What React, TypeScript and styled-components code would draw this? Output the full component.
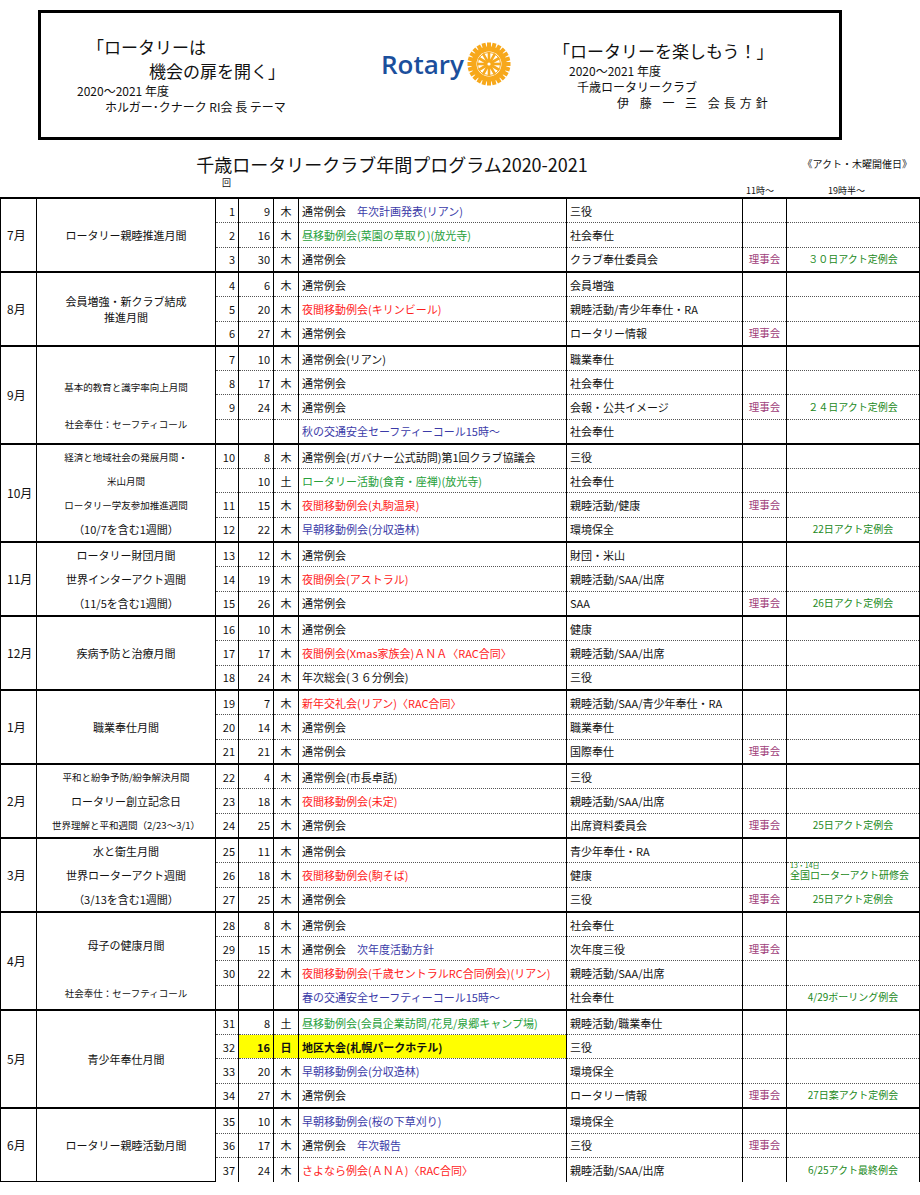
import React from 'react';
import styled, { createGlobalStyle } from 'styled-components';

const Global = createGlobalStyle`
  body { margin: 0; background: #fff; font-family: "Noto Sans CJK JP", "Liberation Sans", sans-serif; color: #111; }
`;

const C = {
  k: '#111',
  b: '#3b3ba8',
  g: '#27a03a',
  r: '#ff1c1c',
  board: '#a0407a',
  act: '#228a22',
};

type Seg = { t: string; c?: string };
type Row = {
  no?: string;
  d?: string;
  w?: string;
  prog: Seg[];
  com: string;
  board?: boolean;
  act?: string;
  actNote?: string;
  hl?: boolean;
};
type Month = { m: string; theme: { t: string; small?: boolean }[]; rows: Row[] };

const P = (t: string, c = C.k): Seg[] => [{ t, c }];

const data: Month[] = [
  {
    m: '7月',
    theme: [{ t: 'ロータリー親睦推進月間' }],
    rows: [
      { no: '1', d: '9', w: '木', prog: [{ t: '通常例会　' }, { t: '年次計画発表(リアン)', c: C.b }], com: '三役' },
      { no: '2', d: '16', w: '木', prog: P('昼移動例会(菜園の草取り)(放光寺)', C.g), com: '社会奉仕' },
      { no: '3', d: '30', w: '木', prog: P('通常例会'), com: 'クラブ奉仕委員会', board: true, act: '３０日アクト定例会' },
    ],
  },
  {
    m: '8月',
    theme: [{ t: '会員増強・新クラブ結成\n推進月間' }],
    rows: [
      { no: '4', d: '6', w: '木', prog: P('通常例会'), com: '会員増強' },
      { no: '5', d: '20', w: '木', prog: P('夜間移動例会(キリンビール)', C.r), com: '親睦活動/青少年奉仕・RA' },
      { no: '6', d: '27', w: '木', prog: P('通常例会'), com: 'ロータリー情報', board: true },
    ],
  },
  {
    m: '9月',
    theme: [{ t: '' }, { t: '基本的教育と識字率向上月間', small: true }, { t: '社会奉仕：セーフティコール', small: true }],
    rows: [
      { no: '7', d: '10', w: '木', prog: P('通常例会(リアン)'), com: '職業奉仕' },
      { no: '8', d: '17', w: '木', prog: P('通常例会'), com: '社会奉仕' },
      { no: '9', d: '24', w: '木', prog: P('通常例会'), com: '会報・公共イメージ', board: true, act: '２４日アクト定例会' },
      { prog: P('秋の交通安全セーフティーコール15時～', C.b), com: '社会奉仕' },
    ],
  },
  {
    m: '10月',
    theme: [{ t: '経済と地域社会の発展月間・', small: true }, { t: '米山月間', small: true }, { t: 'ロータリー学友参加推進週間', small: true }, { t: '（10/7を含む1週間）' }],
    rows: [
      { no: '10', d: '8', w: '木', prog: P('通常例会(ガバナー公式訪問)第1回クラブ協議会'), com: '三役' },
      { d: '10', w: '土', prog: P('ロータリー活動(食育・座禅)(放光寺)', C.g), com: '社会奉仕' },
      { no: '11', d: '15', w: '木', prog: P('夜間移動例会(丸駒温泉)', C.r), com: '親睦活動/健康', board: true },
      { no: '12', d: '22', w: '木', prog: P('早朝移動例会(分収造林)', C.b), com: '環境保全', act: '22日アクト定例会' },
    ],
  },
  {
    m: '11月',
    theme: [{ t: 'ロータリー財団月間' }, { t: '世界インターアクト週間' }, { t: '（11/5を含む1週間）' }],
    rows: [
      { no: '13', d: '12', w: '木', prog: P('通常例会'), com: '財団・米山' },
      { no: '14', d: '19', w: '木', prog: P('夜間例会(アストラル)', C.r), com: '親睦活動/SAA/出席' },
      { no: '15', d: '26', w: '木', prog: P('通常例会'), com: 'SAA', board: true, act: '26日アクト定例会' },
    ],
  },
  {
    m: '12月',
    theme: [{ t: '疾病予防と治療月間' }],
    rows: [
      { no: '16', d: '10', w: '木', prog: P('通常例会'), com: '健康' },
      { no: '17', d: '17', w: '木', prog: P('夜間例会(Xmas家族会)ＡＮＡ〈RAC合同〉', C.r), com: '親睦活動/SAA/出席' },
      { no: '18', d: '24', w: '木', prog: P('年次総会(３６分例会)'), com: '三役' },
    ],
  },
  {
    m: '1月',
    theme: [{ t: '職業奉仕月間' }],
    rows: [
      { no: '19', d: '7', w: '木', prog: P('新年交礼会(リアン)〈RAC合同〉', C.r), com: '親睦活動/SAA/青少年奉仕・RA' },
      { no: '20', d: '14', w: '木', prog: P('通常例会'), com: '職業奉仕' },
      { no: '21', d: '21', w: '木', prog: P('通常例会'), com: '国際奉仕', board: true },
    ],
  },
  {
    m: '2月',
    theme: [{ t: '平和と紛争予防/紛争解決月間', small: true }, { t: 'ロータリー創立記念日' }, { t: '世界理解と平和週間（2/23～3/1）', small: true }],
    rows: [
      { no: '22', d: '4', w: '木', prog: P('通常例会(市長卓話)'), com: '三役' },
      { no: '23', d: '18', w: '木', prog: P('夜間移動例会(未定)', C.r), com: '親睦活動/SAA/出席' },
      { no: '24', d: '25', w: '木', prog: P('通常例会'), com: '出席資料委員会', board: true, act: '25日アクト定例会' },
    ],
  },
  {
    m: '3月',
    theme: [{ t: '水と衛生月間' }, { t: '世界ローターアクト週間' }, { t: '（3/13を含む1週間）' }],
    rows: [
      { no: '25', d: '11', w: '木', prog: P('通常例会'), com: '青少年奉仕・RA' },
      { no: '26', d: '18', w: '木', prog: P('夜間移動例会(駒そば)', C.r), com: '健康', act: '全国ローターアクト研修会', actNote: '13・14日' },
      { no: '27', d: '25', w: '木', prog: P('通常例会'), com: '三役', board: true, act: '25日アクト定例会' },
    ],
  },
  {
    m: '4月',
    theme: [{ t: '' }, { t: '母子の健康月間' }, { t: '' }, { t: '社会奉仕：セーフティコール', small: true }],
    rows: [
      { no: '28', d: '8', w: '木', prog: P('通常例会'), com: '社会奉仕' },
      { no: '29', d: '15', w: '木', prog: [{ t: '通常例会　' }, { t: '次年度活動方針', c: C.b }], com: '次年度三役', board: true },
      { no: '30', d: '22', w: '木', prog: P('夜間移動例会(千歳セントラルRC合同例会)(リアン)', C.r), com: '親睦活動/SAA/出席' },
      { prog: P('春の交通安全セーフティーコール15時～', C.b), com: '社会奉仕', act: '4/29ボーリング例会' },
    ],
  },
  {
    m: '5月',
    theme: [{ t: '青少年奉仕月間' }],
    rows: [
      { no: '31', d: '8', w: '土', prog: P('昼移動例会(会員企業訪問/花見/泉郷キャンプ場)', C.g), com: '親睦活動/職業奉仕' },
      { no: '32', d: '16', w: '日', prog: P('地区大会(札幌パークホテル)'), com: '三役', hl: true },
      { no: '33', d: '20', w: '木', prog: P('早朝移動例会(分収造林)', C.b), com: '環境保全' },
      { no: '34', d: '27', w: '木', prog: P('通常例会'), com: 'ロータリー情報', board: true, act: '27日案アクト定例会' },
    ],
  },
  {
    m: '6月',
    theme: [{ t: 'ロータリー親睦活動月間' }],
    rows: [
      { no: '35', d: '10', w: '木', prog: P('早朝移動例会(桜の下草刈り)', C.b), com: '環境保全' },
      { no: '36', d: '17', w: '木', prog: [{ t: '通常例会　' }, { t: '年次報告', c: C.b }], com: '三役', board: true },
      { no: '37', d: '24', w: '木', prog: P('さよなら例会(ＡＮＡ)〈RAC合同〉', C.r), com: '親睦活動/SAA/出席', act: '6/25アクト最終例会' },
    ],
  },
];

const Page = styled.div`
  width: 920px;
  padding-top: 10px;
`;

const Banner = styled.div`
  margin-left: 38px;
  width: 798px;
  height: 124px;
  border: 3px solid #000;
  display: grid;
  grid-template-columns: 340px 160px 1fr;
  align-items: center;
`;

const Side = styled.div<{ $pad: number }>`
  padding-left: ${(p) => p.$pad}px;
  font-size: 12px;
  line-height: 16px;
`;

const Big = styled.div<{ $indent?: number }>`
  font-size: 17px;
  line-height: 24px;
  padding-left: ${(p) => p.$indent || 0}px;
`;

const Line = styled.div<{ $indent: number; $spaced?: boolean }>`
  padding-left: ${(p) => p.$indent}px;
  letter-spacing: ${(p) => (p.$spaced ? '4px' : '0')};
`;

const Logo = styled.div`
  display: flex;
  align-items: center;
  gap: 3px;
  margin-top: -22px;
  font-family: "Open Sans", "Liberation Sans", sans-serif;
  font-size: 26px;
  font-weight: 600;
  color: #1b4f9c;
`;

const TitleRow = styled.div`
  position: relative;
  height: 36px;
  margin-top: 6px;
  text-align: center;
  font-size: 18px;
  line-height: 36px;
  padding-right: 136px;
`;

const Note = styled.span`
  position: absolute;
  right: 8px;
  top: 0;
  font-size: 10px;
`;

const SubHead = styled.div`
  position: relative;
  height: 15px;
  font-size: 9px;
`;

const Tiny = styled.span<{ $x: number; $y: number }>`
  position: absolute;
  left: ${(p) => p.$x}px;
  top: ${(p) => p.$y}px;
`;

const Table = styled.table`
  border-collapse: collapse;
  width: 919px;
  table-layout: fixed;
  font-size: 11px;
  line-height: 14px;
`;

const Td = styled.td<{ $first?: boolean; $align?: string; $bg?: string; $color?: string; $bold?: boolean; $size?: number }>`
  height: 22px;
  padding: 0 3px;
  border-left: 1px solid #000;
  border-right: 1px solid #000;
  border-top: ${(p) => (p.$first ? '2px solid #000' : '1px dotted #555')};
  text-align: ${(p) => p.$align || 'left'};
  background: ${(p) => p.$bg || 'transparent'};
  color: ${(p) => p.$color || '#111'};
  font-weight: ${(p) => (p.$bold ? 700 : 400)};
  font-size: ${(p) => (p.$size ? `${p.$size}px` : 'inherit')};
  white-space: nowrap;
  overflow: visible;
  vertical-align: middle;
  position: relative;
`;

const MonthTd = styled.td`
  border: 1px solid #000;
  border-top: 2px solid #000;
  text-align: left;
  padding-left: 6px;
  font-size: 12px;
`;

const ThemeTd = styled.td`
  border: 1px solid #000;
  border-top: 2px solid #000;
  padding: 0;
`;

const ThemeStack = styled.div`
  height: 100%;
  display: flex;
  flex-direction: column;
  justify-content: space-around;
  align-items: center;
  text-align: center;
  white-space: pre-line;
  line-height: 16px;
`;

const ThemeLine = styled.div<{ $small?: boolean }>`
  font-size: ${(p) => (p.$small ? '9.5px' : '11px')};
`;

const ActNote = styled.span`
  position: absolute;
  left: 3px;
  top: -5px;
  font-size: 7px;
`;

const Footer = styled.div`
  text-align: right;
  font-size: 10px;
  padding: 10px 12px 0 0;
`;

const Wheel = () => {
  const teeth = Array.from({ length: 24 }, (_, i) => i * 15);
  const spokes = Array.from({ length: 6 }, (_, i) => i * 30);
  return (
    <svg width="44" height="44" viewBox="-22 -22 44 44">
      {teeth.map((a) => (
        <rect key={a} x="-2" y="-21.5" width="4" height="5" fill="#f7a81b" transform={`rotate(${a})`} />
      ))}
      <circle r="17.5" fill="#f7a81b" />
      <circle r="12.5" fill="#fff" />
      <circle r="11.5" fill="none" stroke="#f7a81b" strokeWidth="1" />
      {spokes.map((a) => (
        <rect key={a} x="-1.3" y="-12" width="2.6" height="24" fill="#f7a81b" transform={`rotate(${a})`} />
      ))}
      <circle r="4.5" fill="#f7a81b" />
      <circle r="1.6" fill="#fff" />
    </svg>
  );
};

export default function App() {
  return (
    <Page>
      <Global />
      <Banner>
        <Side $pad={18}>
          <Big $indent={28}>「ロータリーは</Big>
          <Big $indent={90}>機会の扉を開く」</Big>
          <Line $indent={18}>2020～2021 年度</Line>
          <Line $indent={46}>ホルガー･クナーク RI会 長 テーマ</Line>
        </Side>
        <Logo>
          Rotary
          <Wheel />
        </Logo>
        <Side $pad={12}>
          <Big>「ロータリーを楽しもう！」</Big>
          <Line $indent={16}>2020～2021 年度</Line>
          <Line $indent={24}>千歳ロータリークラブ</Line>
          <Line $indent={64} $spaced>伊 藤 一 三 会長方針</Line>
        </Side>
      </Banner>
      <TitleRow>
        千歳ロータリークラブ年間プログラム2020-2021
        <Note>《アクト・木曜開催日》</Note>
      </TitleRow>
      <SubHead>
        <Tiny $x={222} $y={-6}>回</Tiny>
        <Tiny $x={746} $y={2}>11時～</Tiny>
        <Tiny $x={828} $y={2}>19時半～</Tiny>
      </SubHead>
      <Table>
        <colgroup>
          <col style={{ width: 36 }} />
          <col style={{ width: 179 }} />
          <col style={{ width: 23 }} />
          <col style={{ width: 35 }} />
          <col style={{ width: 25 }} />
          <col style={{ width: 268 }} />
          <col style={{ width: 176 }} />
          <col style={{ width: 44 }} />
          <col style={{ width: 133 }} />
        </colgroup>
        <tbody>
          {data.map((mo) =>
            mo.rows.map((r, i) => (
              <tr key={mo.m + i}>
                {i === 0 && (
                  <>
                    <MonthTd rowSpan={mo.rows.length}>{mo.m}</MonthTd>
                    <ThemeTd rowSpan={mo.rows.length} style={{ height: mo.rows.length * 24 }}>
                      <ThemeStack>
                        {mo.theme.map((t, k) => (
                          <ThemeLine key={k} $small={t.small}>
                            {t.t}
                          </ThemeLine>
                        ))}
                      </ThemeStack>
                    </ThemeTd>
                  </>
                )}
                <Td $first={i === 0} $align="right">{r.no}</Td>
                <Td $first={i === 0} $align="right" $bg={r.hl ? '#ffff00' : undefined} $bold={r.hl}>
                  {r.d}
                </Td>
                <Td $first={i === 0} $align="center" $bg={r.hl ? '#ffff00' : undefined} $bold={r.hl}>
                  {r.w}
                </Td>
                <Td $first={i === 0} $bg={r.hl ? '#ffff00' : undefined} $bold={r.hl}>
                  {r.prog.map((s, k) => (
                    <span key={k} style={{ color: s.c }}>
                      {s.t}
                    </span>
                  ))}
                </Td>
                <Td $first={i === 0}>{r.com}</Td>
                <Td $first={i === 0} $align="center" $color={C.board} $size={10.5}>
                  {r.board ? '理事会' : ''}
                </Td>
                <Td $first={i === 0} $align={r.actNote ? 'left' : 'center'} $color={C.act} $size={10}>
                  {r.actNote && <ActNote>{r.actNote}</ActNote>}
                  {r.act}
                </Td>
              </tr>
            ))
          )}
        </tbody>
      </Table>
      <Footer>(2020.7.1)</Footer>
    </Page>
  );
}
